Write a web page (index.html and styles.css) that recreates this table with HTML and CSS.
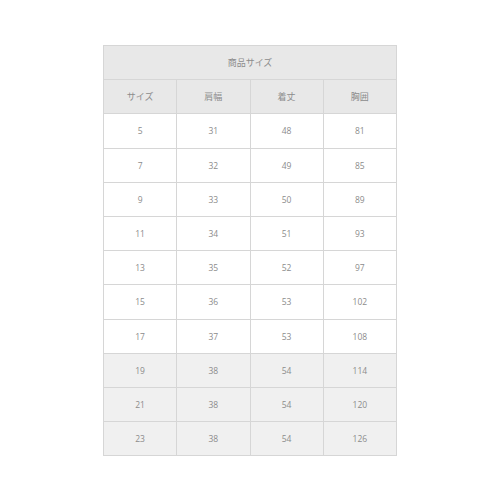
FILE: index.html
```html
<!DOCTYPE html>
<html lang="ja">
<head>
<meta charset="utf-8">
<link rel="stylesheet" href="styles.css">
</head>
<body>
<div class="wrap">
<table class="size-table">
  <tr><th colspan="4" class="title">商品サイズ</th></tr>
  <tr class="head"><th>サイズ</th><th>肩幅</th><th>着丈</th><th>胸囲</th></tr>
  <tr><td>5</td><td>31</td><td>48</td><td>81</td></tr>
  <tr><td>7</td><td>32</td><td>49</td><td>85</td></tr>
  <tr><td>9</td><td>33</td><td>50</td><td>89</td></tr>
  <tr><td>11</td><td>34</td><td>51</td><td>93</td></tr>
  <tr><td>13</td><td>35</td><td>52</td><td>97</td></tr>
  <tr><td>15</td><td>36</td><td>53</td><td>102</td></tr>
  <tr><td>17</td><td>37</td><td>53</td><td>108</td></tr>
  <tr class="alt"><td>19</td><td>38</td><td>54</td><td>114</td></tr>
  <tr class="alt"><td>21</td><td>38</td><td>54</td><td>120</td></tr>
  <tr class="alt"><td>23</td><td>38</td><td>54</td><td>126</td></tr>
</table>
</div>
</body>
</html>
```
FILE: styles.css
```css
html, body {
  margin: 0;
  padding: 0;
  background: #ffffff;
}
.wrap {
  padding: 45px 0 0 103px;
}
.size-table {
  border-collapse: collapse;
  width: 294px;
  table-layout: fixed;
  font-family: "Open Sans", "Noto Sans CJK JP", sans-serif;
  font-size: 8.5px;
  color: #8c8c8c;
}
.size-table th,
.size-table td {
  border: 1px solid #d6d6d6;
  height: 34.2px;
  padding: 0;
  text-align: center;
  vertical-align: middle;
  font-weight: normal;
  box-sizing: border-box;
}
.size-table th {
  background: #e8e8e8;
  font-family: "Noto Sans CJK JP", sans-serif;
  font-size: 9px;
}
.size-table td {
  background: #ffffff;
}
.size-table tr.alt td {
  background: #f0f0f0;
}
```
